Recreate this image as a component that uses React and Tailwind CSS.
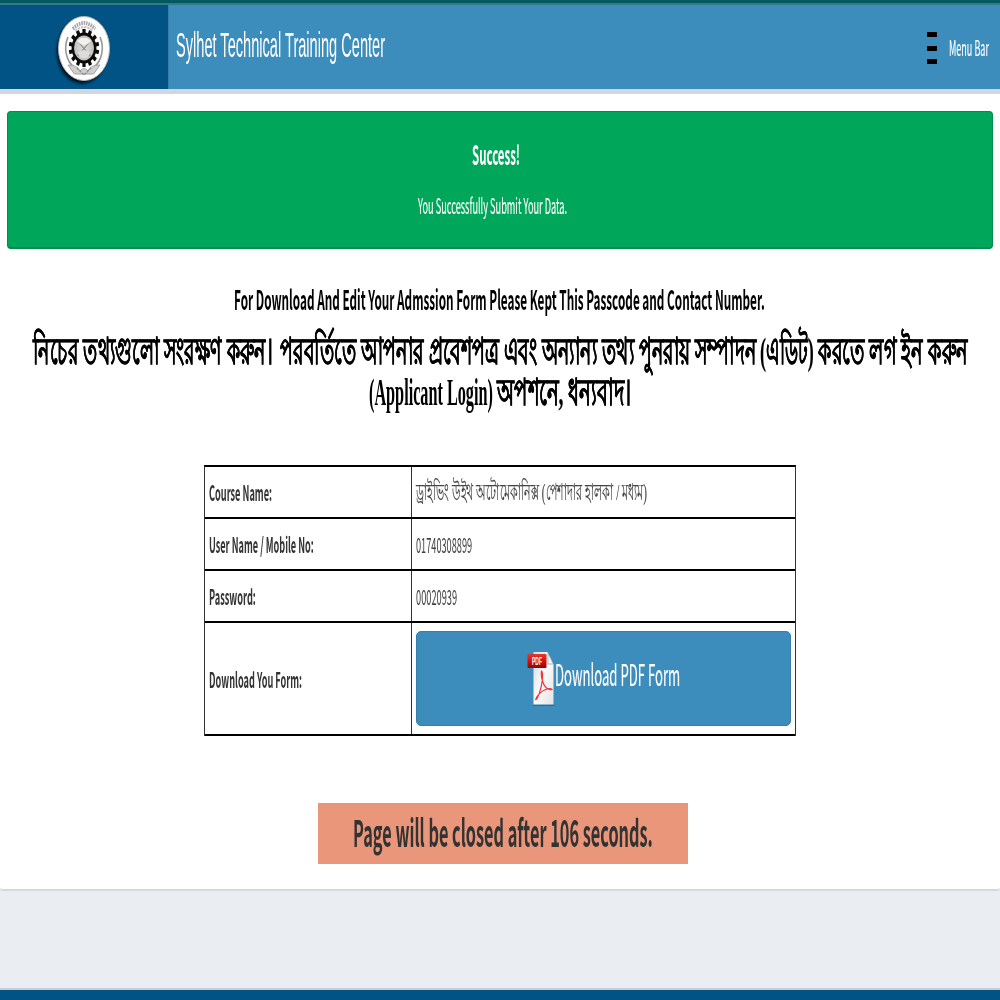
import { useLayoutEffect, useRef, useState } from "react";

const SANS = "font-['Noto_Sans_CJK_JP','Open_Sans',sans-serif]";
const SERIF = "font-['Liberation_Serif',serif]";

/* One line of text condensed horizontally to a given width. */
function Fit({ w, className = "", children }) {
  const ref = useRef(null);
  const [scale, setScale] = useState(0.52);
  useLayoutEffect(() => {
    setScale(w / ref.current.offsetWidth);
  }, [w]);
  return (
    <span className={"block " + className} style={{ width: w }}>
      <span
        ref={ref}
        className="block w-max origin-left whitespace-nowrap"
        style={{ transform: `scaleX(${scale})` }}
      >
        {children}
      </span>
    </span>
  );
}

function Logo() {
  const teeth = Array.from({ length: 14 }, (_, i) => (i * 360) / 14);
  return (
    <svg width="60" height="74" viewBox="0 0 60 74" preserveAspectRatio="none">
      <defs>
        <filter id="soft" x="-20%" y="-20%" width="140%" height="140%">
          <feGaussianBlur stdDeviation="1.6" />
        </filter>
        <radialGradient id="disc">
          <stop offset="0" stopColor="#e4e0d8" />
          <stop offset="1" stopColor="#bcbcbc" />
        </radialGradient>
      </defs>
      <ellipse cx="28" cy="39.5" rx="25" ry="32" fill="#00101e" filter="url(#soft)" />
      <ellipse cx="30" cy="36.5" rx="25.5" ry="32" fill="#fff" stroke="#b5b5b5" strokeWidth="1" />
      <g transform="translate(30 36) scale(0.8 1)">
        <path d="M-20 -11A23 23 0 0 0 -13 19M20 -11A23 23 0 0 1 13 19" fill="none" stroke="#9a9a9a" strokeWidth="2" />
        <path d="M-14 -19Q0 -31 14 -19" fill="none" stroke="#a8a8a8" strokeWidth="4" strokeDasharray="2 1" />
        <path d="M-11 -17Q0 -25 11 -17" fill="none" stroke="#c4c4c4" strokeWidth="2" strokeDasharray="3 1" />
        {teeth.map((a) => (
          <rect key={a} x="-2" y="-19" width="4" height="5" fill="#0b0b0b" transform={`rotate(${a})`} />
        ))}
        <circle r="14" fill="url(#disc)" stroke="#0b0b0b" strokeWidth="3" />
        <path d="M-8 -7L8 8M8 -7L-8 8" stroke="#8c8c8c" strokeWidth="1.2" />
        <path d="M-9 -7Q0 1 9 -7L4 -10H-4Z" fill="#f0f0f0" />
        <path d="M-8 5Q0 -1 8 5L4 10H-4Z" fill="#dcdcdc" />
        <path d="M-20 17Q-8 17 -5 23Q0 18 5 23Q8 17 20 17L12 26H-12Z" fill="#cfcfcf" stroke="#9a9a9a" strokeWidth="1" />
        <path d="M-9 20L0 27L9 20" fill="none" stroke="#8a8a8a" strokeWidth="1.3" strokeDasharray="3 1" />
      </g>
    </svg>
  );
}

function PdfIcon() {
  return (
    <svg width="28" height="56" viewBox="0 0 28 56" preserveAspectRatio="none">
      <defs>
        <linearGradient id="page" x1="0" y1="0" x2="1" y2="1">
          <stop offset="0" stopColor="#d8d8d8" />
          <stop offset="0.5" stopColor="#fafafa" />
          <stop offset="1" stopColor="#e2e2e2" />
        </linearGradient>
        <linearGradient id="tag" x1="0" y1="0" x2="0" y2="1">
          <stop offset="0" stopColor="#e23a34" />
          <stop offset="0.5" stopColor="#d3110f" />
          <stop offset="1" stopColor="#8f0505" />
        </linearGradient>
      </defs>
      <path d="M6 53.5H27.5V55H6Z" fill="#2c6b94" />
      <path d="M6.500 1H20.500L26.500 13.500V53.500H6.500Z" fill="url(#page)" />
      <path d="M20.500 1V13.500H26.500Z" fill="#b3bac0" />
      <path d="M21.500 4V12.500H25.500Z" fill="#f4f4f4" />
      <path
        d="M14.500 20C13.700 24 15 28.500 16 31.500C17.500 36 21 39.500 25 38.500C23 36 14 39 9.500 46.500C8 49.500 9 49.500 10.500 46.500C13.500 41 15.500 31 15.600 25C15.600 22 15.200 20 14.500 20Z"
        fill="none"
        stroke="#f0343a"
        strokeWidth="1.2"
      />
      <rect x="0.500" y="3" width="19" height="14" rx="1" fill="url(#tag)" />
      <text x="5" y="13.500" fontSize="10.500" fontWeight="700" fill="#fff" textLength="10" lengthAdjust="spacingAndGlyphs" fontFamily="Liberation Sans, sans-serif">
        PDF
      </text>
    </svg>
  );
}

function Row({ label, labelWidth, height, children }) {
  return (
    <div className={"flex border-b-2 border-black " + height}>
      <div className="flex w-[207px] items-center border-r border-[#333] pl-1">
        <Fit w={labelWidth} className="text-[21px] leading-[32px] font-bold text-[#333]">
          {label}
        </Fit>
      </div>
      <div className="flex flex-1 items-center pl-[4px] text-[#444]">{children}</div>
    </div>
  );
}

export default function App() {
  return (
    <div className={"flex h-[1000px] w-[1000px] flex-col overflow-hidden bg-[#eaeef3] " + SANS}>
      <div className="h-[3px] shrink-0 bg-[#025a60]" />
      <div className="h-[2px] shrink-0 bg-[#347a8c]" />
      <header className="flex h-[84px] shrink-0 bg-[#3c8dbc]">
        <div className="flex w-[168px] justify-center bg-[#005384] pt-[7px]">
          <Logo />
        </div>
        <div className="flex flex-1 items-start justify-between border-l border-[#367fa9] pr-[11px] pl-[7px] text-white">
          <Fit w={209} className="pt-[20px] font-['Liberation_Sans',sans-serif] text-[34.500px] leading-[40px]">
            Sylhet Technical Training Center
          </Fit>
          <div className="flex">
            <div className="flex w-[22px] flex-col gap-[8.500px] pt-[27px]">
              <span className="h-[5px] w-[10px] bg-black" />
              <span className="h-[5px] w-[10px] bg-black" />
              <span className="h-[5px] w-[10px] bg-black" />
            </div>
            <Fit w={40} className="pt-[24px] text-[20.800px] leading-[36px] [-webkit-text-stroke:0.15px_white]">
              Menu Bar
            </Fit>
          </div>
        </div>
      </header>
      <div className="h-[5px] shrink-0 bg-[#d2d6de]" />

      <main className="flex h-[797px] shrink-0 flex-col items-center rounded-b-[3px] border-b-2 border-[#d3dade] bg-white pt-[17px]">
        <section className="flex h-[138px] w-[986px] flex-col items-center rounded-[4px] border border-b-2 border-[#008d4c] bg-[#00a65a] pt-[22px] pr-[8px] text-white">
          <Fit w={48} className="text-[26.500px] leading-[40px] font-bold">
            Success!
          </Fit>
          <Fit w={149} className="mt-[15px] mr-[7px] text-[21px] leading-[32px] [-webkit-text-stroke:0.15px_white]">
            You Successfully Submit Your Data.
          </Fit>
        </section>

        <Fit w={531} className="mt-[30px] mr-px text-[26.500px] leading-[40px] font-bold text-black">
          For Download And Edit Your Admssion Form Please Kept This Passcode and Contact Number.
        </Fit>
        <div className={"mt-[10px] flex flex-col items-center text-[38.400px] font-bold text-black " + SERIF}>
          <div className="flex h-[42px] pt-px leading-[42px] [-webkit-text-stroke:0.2px_black]">
            <Fit w={240} className="mr-[7px]">নিচের তথ্যগুলো সংরক্ষণ করুন।</Fit>
            <Fit w={219} className="mr-[5px]">পরবর্তিতে আপনার প্রবেশপত্র</Fit>
            <Fit w={252} className="mr-[4px]">এবং অন্যান্য তথ্য পুনরায় সম্পাদন</Fit>
            <Fit w={54} className="mr-[4px]">(এডিট)</Fit>
            <Fit w={150}>করতে লগ ইন করুন</Fit>
          </div>
          <div className="flex h-[42px] leading-[42px]">
            <Fit w={124} className="mr-[4px] pt-px text-[37px]">(Applicant Login)</Fit>
            <Fit w={134} className="[-webkit-text-stroke:0.2px_black]">অপশনে, ধন্যবাদ।</Fit>
          </div>
        </div>

        <div className="mt-[52px] w-[592px] shrink-0 border-x border-t-2 border-[#333] border-t-black">
          <Row label="Course Name:" labelWidth={63} height="h-[52px]">
            <Fit w={231} className={"text-[24px] leading-[32px] [-webkit-text-stroke:0.2px_#444] " + SERIF}>
              ড্রাইভিং উইথ অটোমেকানিক্স (পেশাদার হালকা / মধ্যম)
            </Fit>
          </Row>
          <Row label="User Name / Mobile No:" labelWidth={105} height="h-[52px]">
            <Fit w={56} className="text-[21px] leading-[32px]">
              01740308899
            </Fit>
          </Row>
          <Row label="Password:" labelWidth={47} height="h-[52px]">
            <Fit w={41} className="text-[21px] leading-[32px]">
              00020939
            </Fit>
          </Row>
          <Row label="Download You Form:" labelWidth={93} height="h-[113px]">
            <button className="flex h-[95px] w-[375px] items-start justify-center rounded-[5px] border border-[#367fa9] bg-[#3c8dbc] pt-[19px] font-normal text-white">
              <PdfIcon />
              <Fit w={125} className="text-[29.500px] leading-[44px] [-webkit-text-stroke:0.15px_white]">
                Download PDF Form
              </Fit>
            </button>
          </Row>
        </div>

        <div className="mt-[67px] ml-[6px] flex h-[61px] w-[370px] shrink-0 items-center justify-center bg-[#e9967a] pb-[5px] text-[#333]">
          <Fit w={300} className="text-[37px] leading-[56px] font-bold">
            Page will be closed after 106 seconds.
          </Fit>
        </div>
      </main>

      <footer className="mt-auto h-[12px] shrink-0 border-t-2 border-[#c6cfd8] bg-[#005384]" />
    </div>
  );
}
